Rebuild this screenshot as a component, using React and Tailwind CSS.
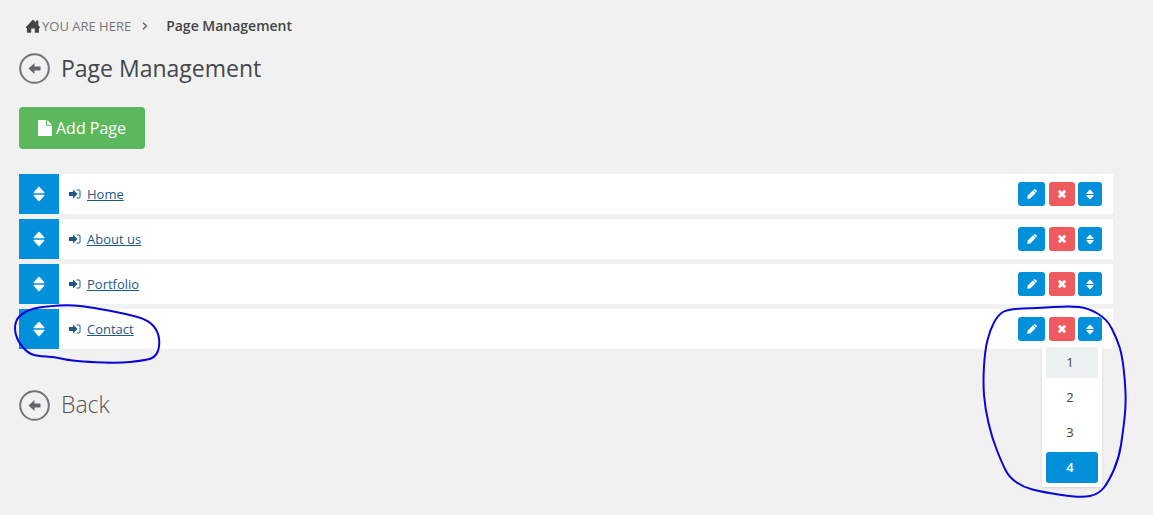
const pages = ["Home", "About us", "Portfolio", "Contact"];
const positions = [1, 2, 3, 4];

function HomeIcon() {
    return (
        <svg viewBox="0 0 16 14" className="h-[14px] w-4" fill="#444" aria-hidden="true">
            <path d="M7.3 1.2Q8 .4 8.7 1.2L11 3.6V1.5h2.3v4.4l1.7 2.4q.4.6-.3.7H14v4.3q0 .5-.5.5H9.8V9.5H6.2v4.3H2.5q-.5 0-.5-.5V9H1.2Q.4 8.9.8 8.3Z" />
        </svg>
    );
}

function FileIcon() {
    return (
        <svg viewBox="0 0 14 16" className="h-4 w-[14px]" fill="currentColor" aria-hidden="true">
            <path d="M.7 0H8v5q0 .8.8.8H14v9.5q0 .7-.7.7H.7q-.7 0-.7-.7V.7Q0 0 .7 0ZM9.1.1 13.9 4.8H9.1Z" />
        </svg>
    );
}

function SortIcon({ className }) {
    return (
        <svg viewBox="0 0 12 16" className={className} fill="currentColor" aria-hidden="true">
            <path d="M5.4 1 .7 6.2q-.4 1 .4 1h9.800q.8 0 .4-1L6.600 1Q6 .4 5.400 1ZM5.400 15 .7 9.800q-.4-1 .4-1h9.800q.8 0 .4 1L6.600 15q-.6.6-1.200 0Z" />
        </svg>
    );
}

function PencilIcon() {
    return (
        <svg viewBox="0 0 10 10" className="size-[10px]" fill="currentColor" aria-hidden="true">
            <path d="M.2 9.8.6 6.700 6 1.300 8.700 4 3.300 9.400ZM6.500.8 7 .4q.7-.6 1.400 0L9.600 1.600q.6.7 0 1.400L9.200 3.500Z" />
        </svg>
    );
}

function CrossIcon() {
    return (
        <svg viewBox="0 0 10 10" className="size-[10px]" aria-hidden="true">
            <path d="m2.800 2.800 4.400 4.400M7.200 2.800 2.800 7.200" fill="none" stroke="currentColor" strokeWidth="2.800" strokeLinecap="square" />
        </svg>
    );
}

function EnterIcon() {
    return (
        <svg viewBox="0 0 12 10" className="h-[10px] w-3" aria-hidden="true">
            <path d="M0 3h4V.6L8.600 5 4 9.400V7H0Z" fill="currentColor" />
            <path d="M7.500 1H10q1 0 1 1v6q0 1-1 1H7.500" fill="none" stroke="currentColor" strokeWidth="1" />
        </svg>
    );
}

function BackIcon() {
    return (
        <svg viewBox="0 0 31 31" className="size-[31px] shrink-0" aria-hidden="true">
            <circle cx="15.500" cy="15.500" r="14.300" fill="none" stroke="#71757a" strokeWidth="2" />
            <path d="m9.500 15.500 6-5.500v3.600h6v3.800h-6V21Z" fill="#62666b" />
        </svg>
    );
}

const leftLoop = [
    [82, 306], [66, 305], [52, 306], [33, 308], [18, 316], [14, 328], [18, 342], [28, 353], [37, 356],
    [55, 357], [67, 360], [88, 362], [120, 363], [140, 361], [155, 358], [160, 346], [158, 331],
    [148, 320], [127, 314], [100, 309],
];

const rightLoop = [
    [1070, 306], [1037, 308], [1008, 309], [998, 315], [990, 330], [985, 350], [983, 382], [985, 408],
    [992, 438], [1002, 463], [1009, 477], [1023, 487], [1042, 492], [1081, 498], [1099, 494],
    [1109, 481], [1119, 458], [1123, 432], [1126, 405], [1125, 380], [1122, 355], [1117, 339],
    [1107, 319], [1088, 308],
];

// closed curve that runs through the middle of each pair of points
function loopPath(points) {
    const mid = (a, b) => `${(a[0] + b[0]) / 2} ${(a[1] + b[1]) / 2}`;
    const last = points[points.length - 1];
    return `M${mid(last, points[0])}` + points.map((p, i) => `Q${p[0]} ${p[1]} ${mid(p, points[(i + 1) % points.length])}`).join("") + "Z";
}

function PositionMenu() {
    return (
        <div role="menu" aria-label="Position" className="absolute right-[11px] top-[34px] z-10 flex w-[60px] flex-col gap-1 bg-white p-1 shadow-sm">
            {positions.map((n) => (
                <button
                    key={n}
                    role="menuitem"
                    className={
                        n === 4
                            ? "h-[31px] rounded-[3px] bg-[#0390db] pb-[2px] pr-1 text-center font-semibold text-white"
                            : n === 1
                              ? "h-[31px] rounded-[3px] bg-[#eef1f2] pb-[2px] pr-1 text-center"
                              : "h-[31px] rounded-[3px] pb-[2px] pr-1 text-center"
                    }
                >
                    {n}
                </button>
            ))}
        </div>
    );
}

function PageRow({ name, open }) {
    return (
        <li className="relative flex h-10 items-center bg-white">
            <button aria-label={`Drag ${name}`} className="flex size-10 items-center justify-center bg-[#0390db] text-white">
                <SortIcon className="h-4 w-3" />
            </button>
            <a href="#" className="ml-[10px] flex items-center gap-[6px] text-[#1d5a85]">
                <EnterIcon />
                <span className="underline">{name}</span>
            </a>
            <div className="ml-auto flex pr-[11px] text-white">
                <button aria-label={`Edit ${name}`} className="mr-1 flex h-6 w-[27px] items-center justify-center rounded-[3px] bg-[#0390db]">
                    <PencilIcon />
                </button>
                <button aria-label={`Delete ${name}`} className="mr-[3px] flex h-6 w-[26px] items-center justify-center rounded-[3px] bg-[#ef5a5f]">
                    <CrossIcon />
                </button>
                <button aria-label={`Move ${name}`} className="flex h-6 w-6 items-center justify-center rounded-[3px] bg-[#0390db]">
                    <SortIcon className="h-[11px] w-2" />
                </button>
            </div>
            {open && <PositionMenu />}
            {open && (
                <svg viewBox="11 301 152 64" className="pointer-events-none absolute -left-2 -top-2 z-20 h-16 w-[152px]" aria-hidden="true">
                    <path d={loopPath(leftLoop)} fill="none" stroke="#0a06d8" strokeWidth="2" />
                </svg>
            )}
            {open && (
                <svg viewBox="977 301 152 200" className="pointer-events-none absolute -right-4 -top-2 z-20 h-[200px] w-[152px]" aria-hidden="true">
                    <path d={loopPath(rightLoop)} fill="none" stroke="#0a06d8" strokeWidth="2" />
                </svg>
            )}
        </li>
    );
}

export default function App() {
    return (
        <main className="min-h-screen bg-[#f1f1f1] pl-[19px] pr-10 pt-4 font-['Open_Sans',sans-serif] text-[13px] leading-5 text-[#444]">
            {/* Breadcrumb */}
            <nav aria-label="Breadcrumb" className="flex items-center pl-[6px]">
                <HomeIcon />
                <a href="#" className="ml-px text-[#777]">YOU ARE HERE</a>
                <svg viewBox="0 0 6 8" className="ml-[11px] mr-[18px] h-2 w-[6px]" aria-hidden="true">
                    <path d="m1 .8 3.500 3.200L1 7.200" fill="none" stroke="#555" strokeWidth="1.200" />
                </svg>
                <span className="text-sm font-semibold leading-5">Page Management</span>
            </nav>

            {/* Title */}
            <div className="mt-[17px] flex items-center gap-[11px]">
                <a href="#" aria-label="Back">
                    <BackIcon />
                </a>
                <h1 className="pb-[2px] text-[23px] font-medium leading-7 text-[#43474c]">Page Management</h1>
            </div>

            <button className="mt-[23px] flex h-[42px] items-center gap-1 rounded bg-[#5cb85c] px-[19px] text-base text-white">
                <FileIcon />
                Add Page
            </button>

            {/* Pages */}
            <ul className="mt-[25px] flex flex-col gap-[5px]">
                {pages.map((name) => (
                    <PageRow key={name} name={name} open={name === "Contact"} />
                ))}
            </ul>

            <a href="#" className="mt-[39px] inline-flex items-center gap-[11px] text-[23px] font-light leading-8 text-[#555]">
                <BackIcon />
                <span className="pb-[2px]">Back</span>
            </a>
        </main>
    );
}
